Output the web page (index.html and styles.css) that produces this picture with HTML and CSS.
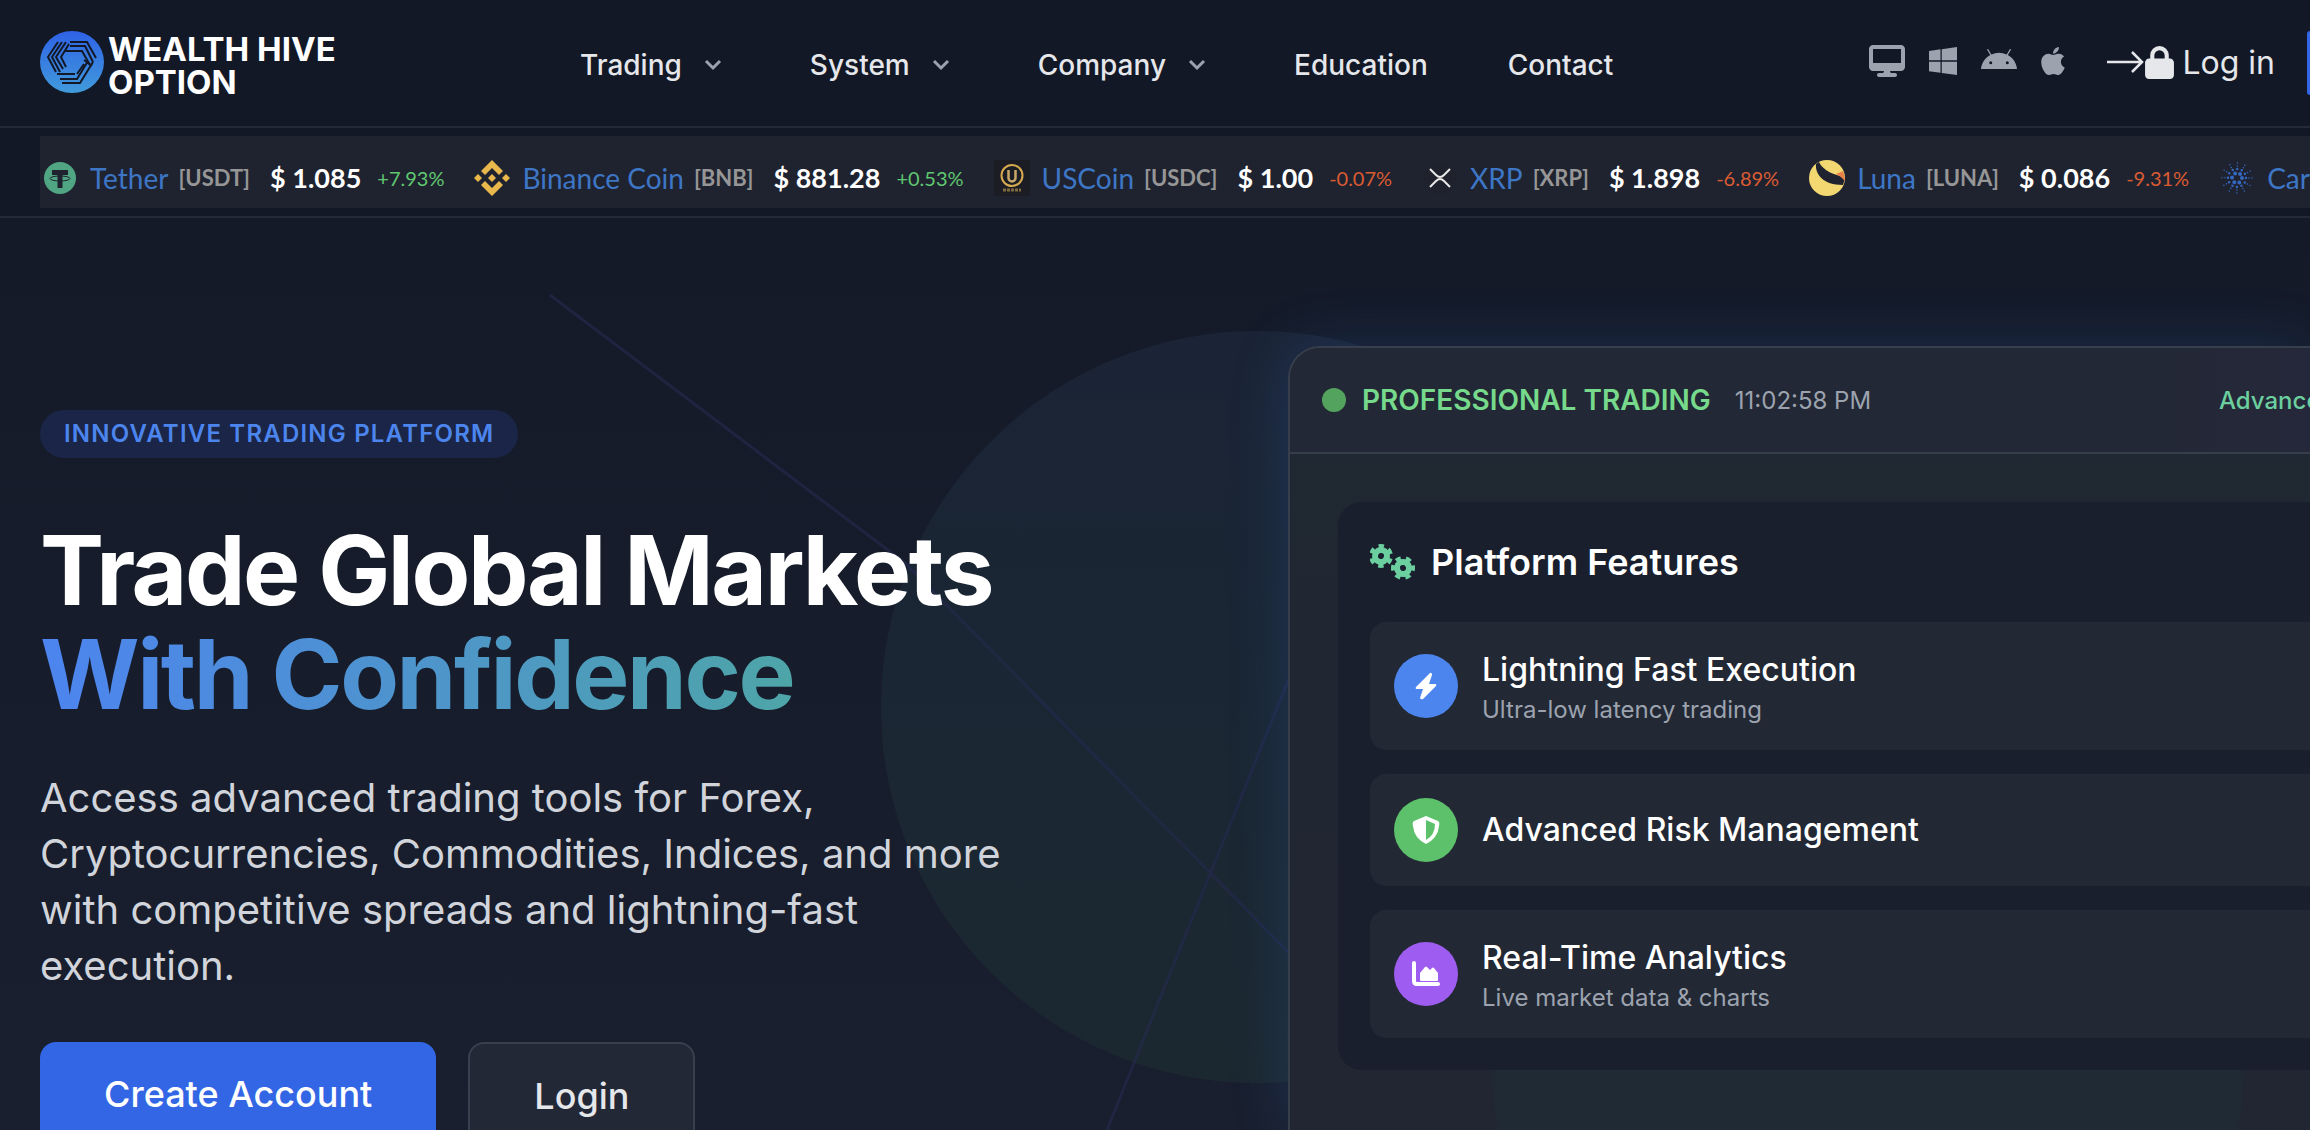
FILE: index.html
```html
<!DOCTYPE html>
<html lang="en">
<head>
<meta charset="utf-8">
<title>Wealth Hive Option</title>
<link rel="stylesheet" href="styles.css">
</head>
<body>
<header class="topbar">
  <a class="brand" href="#">
    <svg class="brand-mark" viewBox="0 0 64 62" aria-hidden="true">
      <defs><linearGradient id="bg" x1="0" y1="0" x2="0" y2="1"><stop offset="0" stop-color="#2f62e6"/><stop offset="1" stop-color="#419bdb"/></linearGradient></defs>
      <ellipse cx="32" cy="31" rx="32" ry="31" fill="url(#bg)"/>
      <g fill="none" stroke="#121826" stroke-width="2">
        <path d="M18 11 8 26 16 41M22 11 12 26 20 41M26 11 16 26 23 38M29 13 21 26 26 36"/>
        <path d="M30 11H47L56 27M30 15H45L53 31M25 20H42L50 34"/>
        <path d="M17 43H35M20 48H37L48 30M22 52H40L53 31M44 29 52 35M37 43 44 33"/>
      </g>
    </svg>
    <span class="brand-name">WEALTH HIVE<br>OPTION</span>
  </a>
  <nav class="menu">
    <button class="menu-item" type="button">Trading<svg viewBox="0 0 18 12"><path d="M2 2 9 9 16 2"/></svg></button>
    <button class="menu-item" type="button">System<svg viewBox="0 0 18 12"><path d="M2 2 9 9 16 2"/></svg></button>
    <button class="menu-item" type="button">Company<svg viewBox="0 0 18 12"><path d="M2 2 9 9 16 2"/></svg></button>
    <a class="menu-item" href="#">Education</a>
    <a class="menu-item" href="#">Contact</a>
  </nav>
  <div class="platforms">
    <svg width="36" height="32" viewBox="0 0 576 512"><path d="M64 0C29 0 0 29 0 64v288c0 35 29 64 64 64h176l-11 32h-69c-18 0-32 14-32 32s14 32 32 32h256c18 0 32-14 32-32s-14-32-32-32h-69l-11-32h176c35 0 64-29 64-64V64c0-35-29-64-64-64zm448 64v224H64V64z"/></svg>
    <svg width="28" height="32" viewBox="0 0 448 512"><path d="M0 94 184 68v177H0zm0 324 184 26V268H0zm204 28 244 34V268H204zm0-380v179h244V32z"/></svg>
    <svg width="36" height="32" viewBox="0 0 576 512"><path d="M421 306a24 24 0 1 1 0-48 24 24 0 0 1 0 48m-265 0a24 24 0 1 1 0-48 24 24 0 0 1 0 48m273-145 48-83a10 10 0 0 0-17-10l-49 84a302 302 0 0 0-246 0L117 68a10 10 0 0 0-17 10l48 83C65 206 9 289 0 384h576c-8-95-65-178-147-223"/></svg>
    <svg width="24" height="32" viewBox="0 0 384 512"><path d="M319 269c0-37 16-64 50-85-19-27-47-42-85-45-35-3-74 21-88 21-15 0-49-20-76-20C64 141 4 185 4 274q0 39 14 81c13 37 59 127 107 125 25-1 43-18 76-18 32 0 48 18 76 18 49-1 90-82 102-119-65-31-60-90-60-92M262 105c27-32 25-62 24-73-24 1-52 16-68 35-17 20-28 44-25 71 26 2 50-11 69-33"/></svg>
  </div>
  <a class="login-link" href="#">
    <svg width="38" height="22" viewBox="0 0 38 22" fill="none" stroke="currentColor" stroke-width="2.500"><path d="M0 11H35M25 1 35 11 25 21"/></svg>
    <svg width="29" height="33" viewBox="0 0 448 512"><path fill="currentColor" d="M144 144v48h160v-48a80 80 0 0 0-160 0m-64 48v-48a144 144 0 0 1 288 0v48h16c35 0 64 29 64 64v192c0 35-29 64-64 64H64c-35 0-64-29-64-64V256c0-35 29-64 64-64z"/></svg>
    <span>Log in</span>
  </a>
  <a class="signup-link" href="#"></a>
</header>

<section class="ticker-bar">
  <ul class="ticker">
    <li class="coin">
      <svg class="coin-icon" viewBox="0 0 36 36"><circle cx="18" cy="18" r="16" fill="#50a583"/><path d="M10 10h16v5h-5.500v13h-5V15H10z" fill="#1f2330"/><ellipse cx="18" cy="18.500" rx="10" ry="2.500" fill="none" stroke="#1f2330"/></svg>
      <a href="#">Tether</a><span class="sym">[USDT]</span><b>$ 1.085</b><span class="up">+7.93%</span></li>
    <li class="coin">
      <svg class="coin-icon" viewBox="0 0 36 36" fill="#e8b84d"><path d="m18 0 11 11-4 4-7-7-7 7-4-4zM4 14l4 4-4 4-4-4zM32 14l4 4-4 4-4-4zM18 14l4 4-4 4-4-4zM18 36 7 25l4-4 7 7 7-7 4 4z"/></svg>
      <a href="#">Binance Coin</a><span class="sym">[BNB]</span><b>$ 881.28</b><span class="up">+0.53%</span></li>
    <li class="coin">
      <svg class="coin-icon" viewBox="0 0 36 36"><path d="M0 0h36v36H0z" fill="#1c1d24"/><circle cx="18" cy="15.500" r="10.500" fill="none" stroke="#d9ab50" stroke-width="2"/><path d="M14.500 10v8a3.500 3.500 0 0 0 7 0v-8" fill="none" stroke="#c9a96a" stroke-width="2.500"/><path d="M9 30h18" stroke="#806a3e" stroke-width="3" stroke-dasharray="3 1"/></svg>
      <a href="#">USCoin</a><span class="sym">[USDC]</span><b>$ 1.00</b><span class="down">-0.07%</span></li>
    <li class="coin">
      <svg class="coin-icon" viewBox="0 0 36 36"><circle cx="18" cy="18" r="16" fill="#1f222c"/><path d="m8 9 6 6q4 4 8 0l6-6M8 27l6-6q4-4 8 0l6 6" fill="none" stroke="#e8e8e8" stroke-width="2"/></svg>
      <a href="#">XRP</a><span class="sym">[XRP]</span><b>$ 1.898</b><span class="down">-6.89%</span></li>
    <li class="coin">
      <svg class="coin-icon" viewBox="0 0 36 36"><circle cx="18" cy="18" r="18" fill="#f3d871"/><path d="M7 4C6 14 14 25 34 25q2-4 1-8C26 15 14 11 10 2z" fill="#1f2330"/><path d="M27 14 34 11q2 5 2 10-3-4-9-7" fill="#e8824a"/></svg>
      <a href="#">Luna</a><span class="sym">[LUNA]</span><b>$ 0.086</b><span class="down">-9.31%</span></li>
    <li class="coin">
      <svg class="coin-icon" viewBox="0 0 36 36" fill="none" stroke="#3468c0" stroke-linecap="round"><circle cx="18" cy="18" r="5" stroke-width="4" stroke-dasharray="0 5.240"/><circle cx="18" cy="18" r="9" stroke-width="2.500" stroke-dasharray="0 4.710"/><circle cx="18" cy="18" r="12" stroke-width="1.500" stroke-dasharray="0 6.280"/><circle cx="18" cy="18" r="15" stroke-width="1.500" stroke-dasharray="0 7.850"/></svg>
      <a href="#">Cardano</a></li>
  </ul>
</section>

<main class="hero">
  <svg class="backdrop" width="1400" height="912" viewBox="0 0 1400 912" aria-hidden="true">
    <defs><linearGradient id="orb" x1="0" y1="0" x2="0" y2="1"><stop offset="0" stop-color="#1b2436"/><stop offset=".45" stop-color="#1a2633"/><stop offset="1" stop-color="#1c2830"/></linearGradient></defs>
    <circle cx="1257" cy="489" r="376" fill="url(#orb)"/>
    <g fill="none" stroke="#242a4c" stroke-width="3" stroke-opacity=".7"><path d="M550 77 905 345 1300 746"/><path d="M1107 912 1300 433"/></g>
  </svg>
  <div class="pitch">
    <span class="badge">INNOVATIVE TRADING PLATFORM</span>
    <h1>Trade Global Markets<br><span class="accent">With Confidence</span></h1>
    <p class="lead">Access advanced trading tools for Forex, Cryptocurrencies, Commodities, Indices, and more with competitive spreads and lightning-fast execution.</p>
    <div class="actions">
      <a class="btn primary" href="#">Create Account</a>
      <a class="btn outline" href="#">Login</a>
    </div>
  </div>
  <section class="card">
    <div class="card-head">
      <i class="dot"></i><strong>PROFESSIONAL TRADING</strong><time>11:02:58 PM</time><span class="tag">Advanced</span>
    </div>
    <div class="card-body">
      <div class="features">
        <h2><svg width="45" height="36" viewBox="0 0 45 36"><g fill="none" stroke="#6ccf9f"><g transform="rotate(15 11 12)"><circle cx="11" cy="12" r="6" stroke-width="6"/><circle cx="11" cy="12" r="9.500" stroke-width="5" stroke-dasharray="5 4.950"/></g><g transform="rotate(-15 33 24)"><circle cx="33" cy="24" r="6" stroke-width="6"/><circle cx="33" cy="24" r="9.500" stroke-width="5" stroke-dasharray="5 4.950"/></g></g></svg>Platform Features</h2>
        <ul>
          <li><span class="bubble blue"><svg width="28" height="28" viewBox="0 0 28 28"><path d="M18 1 4 15q-1 2 1 2h6L8 26q1 2 3 1l13-13q1-2-1-2h-6l3-9q0-3-2-2" fill="#fff"/></svg></span><div><h3>Lightning Fast Execution</h3><p>Ultra-low latency trading</p></div></li>
          <li><span class="bubble green"><svg width="28" height="28" viewBox="0 0 28 28"><path fill="#fff" fill-rule="evenodd" d="M14 0 26 5q2 1 1 5-1 12-13 18Q2 22 1 10 0 6 2 5zm0 4v20q9-5 9-16z"/></svg></span><div><h3>Advanced Risk Management</h3></div></li>
          <li><span class="bubble purple"><svg width="28" height="28" viewBox="0 0 28 28" fill="none"><path d="M2 3v18q0 3 3 3h21" stroke="#fff" stroke-width="4" stroke-linecap="round"/><path d="M8 20v-7l5-6q1-1 2 0l3 3 2-2q1-1 2 0l4 5v7q0 1-1 1H9q-1 0-1-1" fill="#fff"/></svg></span><div><h3>Real-Time Analytics</h3><p>Live market data &amp; charts</p></div></li>
        </ul>
      </div>
    </div>
  </section>
</main>
</body>
</html>
```

FILE: styles.css
```css
* { box-sizing: border-box; margin: 0; padding: 0; }
html { overflow: hidden; }
body {
  height: 100vh;
  overflow: hidden;
  display: flex;
  flex-direction: column;
  background: #121826;
  color: #e5e7eb;
  font-family: Inter, "Liberation Sans", sans-serif;
}
a { color: inherit; text-decoration: none; }
ul { list-style: none; }
button { font: inherit; color: inherit; background: none; border: 0; }

.topbar {
  flex: none;
  display: flex;
  align-items: center;
  height: 128px;
  padding-left: 40px;
  border-bottom: 2px solid #232937;
  white-space: nowrap;
}
.brand { display: flex; align-items: center; gap: 4px; width: 540px; flex: none; padding-bottom: 2px; }
.brand-mark { width: 64px; height: 62px; }
.brand-name { font-size: 33px; line-height: 33px; font-weight: 700; color: #fff; padding-top: 8px; }
.menu { display: flex; align-items: center; gap: 80px; flex: 1; padding-top: 4px; }
.menu-item { display: flex; align-items: center; gap: 22px; font-size: 28px; line-height: 40px; font-weight: 500; }
.menu-item svg { width: 18px; height: 12px; margin-right: 8px; fill: none; stroke: #9ca3af; stroke-width: 3; }
.platforms { display: flex; align-items: center; gap: 24px; margin-right: 42px; padding-bottom: 4px; fill: #9ca3af; }
.login-link { display: flex; align-items: center; font-size: 32px; padding-bottom: 2px; }
.login-link span { margin-left: 8px; }
.signup-link {
  width: 3px;
  height: 64px;
  margin-left: 32px;
  border-radius: 16px 0 0 16px;
  background: #3366e4;
}

.ticker-bar { flex: none; padding: 8px 0 8px 40px; border-bottom: 2px solid #232937; }
.ticker {
  display: flex;
  align-items: center;
  gap: 30px;
  height: 72px;
  padding: 12px 0 0 2px;
  overflow: hidden;
  background: #1f2330;
  font-family: Lato, "Liberation Sans", sans-serif;
  white-space: nowrap;
}
.coin { display: flex; align-items: center; flex: none; line-height: 36px; }
.coin-icon { width: 36px; height: 36px; margin-right: 12px; }
.coin a { font-size: 28px; color: #3e76c6; margin-right: 10px; }
.coin .sym { font-size: 22px; font-weight: 700; color: #969696; margin-right: 20px; }
.coin b { font-size: 27px; color: #fff; margin-right: 16px; }
.coin .up, .coin .down { font-size: 20px; }
.coin .up { color: #5fc76f; }
.coin .down { color: #da5b32; }

.hero {
  flex: 1;
  min-height: 0;
  position: relative;
  display: flex;
  background: linear-gradient(180deg, #141a28, #191f2e);
}
.backdrop { position: absolute; left: 0; top: 0; }
.pitch { position: relative; width: 1288px; flex: none; padding: 192px 0 0 40px; }
.badge {
  display: inline-block;
  padding: 0 24px;
  border-radius: 24px;
  background: #1a2547;
  color: #4d85ee;
  font-size: 24px;
  line-height: 48px;
  font-weight: 600;
  letter-spacing: 0.05em;
}
h1 { margin-top: 60px; font-size: 96px; line-height: 104px; font-weight: 700; letter-spacing: -0.025em; color: #fff; }
.accent { display: inline-block; background: linear-gradient(90deg, #4d84f0, #4ea5a8); -webkit-background-clip: text; background-clip: text; color: transparent; }
.lead { width: 1000px; margin-top: 44px; font-size: 40px; line-height: 56px; color: #d1d5db; }
.actions { display: flex; gap: 32px; margin-top: 48px; }
.btn { height: 104px; border-radius: 16px; font-size: 36px; line-height: 104px; font-weight: 500; }
.primary { padding: 0 64px; background: #3366e4; color: #fff; }
.outline { padding: 0 64px; border: 2px solid #383f4d; background: #222835; }

.card {
  position: relative;
  flex: 1;
  min-width: 0;
  margin-top: 128px;
  border: 2px solid #383f4c;
  border-width: 2px 0 0 2px;
  border-radius: 32px 0 0 0;
  background: radial-gradient(circle 377px at 578px 720px, #202a34 99%, transparent), linear-gradient(180deg, #1f2832, #222632);
  box-shadow: 0 0 60px rgba(59, 130, 246, .18);
}
.card-head { display: flex; align-items: center; height: 106px; padding-left: 32px; border-bottom: 2px solid #383f4c; border-radius: 30px 0 0 0; background: linear-gradient(90deg, #222835 80%, #25283a); overflow: hidden; white-space: nowrap; }
.dot { width: 24px; height: 24px; margin-right: 16px; border-radius: 50%; background: #53a35e; }
.card-head strong { font-size: 28px; font-weight: 600; color: #76d98b; }
.card-head time { margin-left: 24px; font-size: 24px; color: #9ca3af; }
.tag { margin-left: auto; width: 91px; font-size: 24px; font-weight: 500; color: #6ccf9f; }
.card-body { padding: 48px 0 0 48px; }
.features { padding: 32px 0 32px 32px; border-radius: 24px 0 0 24px; background: #191f2d; }
.features h2 { display: flex; align-items: center; gap: 16px; height: 56px; font-size: 36px; font-weight: 600; color: #fff; }
.features ul { display: grid; gap: 24px; margin-top: 32px; }
.features li { display: flex; align-items: center; gap: 24px; padding: 24px; border-radius: 16px 0 0 16px; background: #222834; }
.bubble { display: grid; place-items: center; width: 64px; height: 64px; border-radius: 50%; }
.blue { background: #4d85ee; }
.green { background: #5dc06a; }
.purple { background: #9e5df0; }
.features h3 { font-size: 32px; line-height: 48px; font-weight: 500; color: #fff; }
.features p { font-size: 24px; line-height: 32px; color: #9ca3af; }
```
